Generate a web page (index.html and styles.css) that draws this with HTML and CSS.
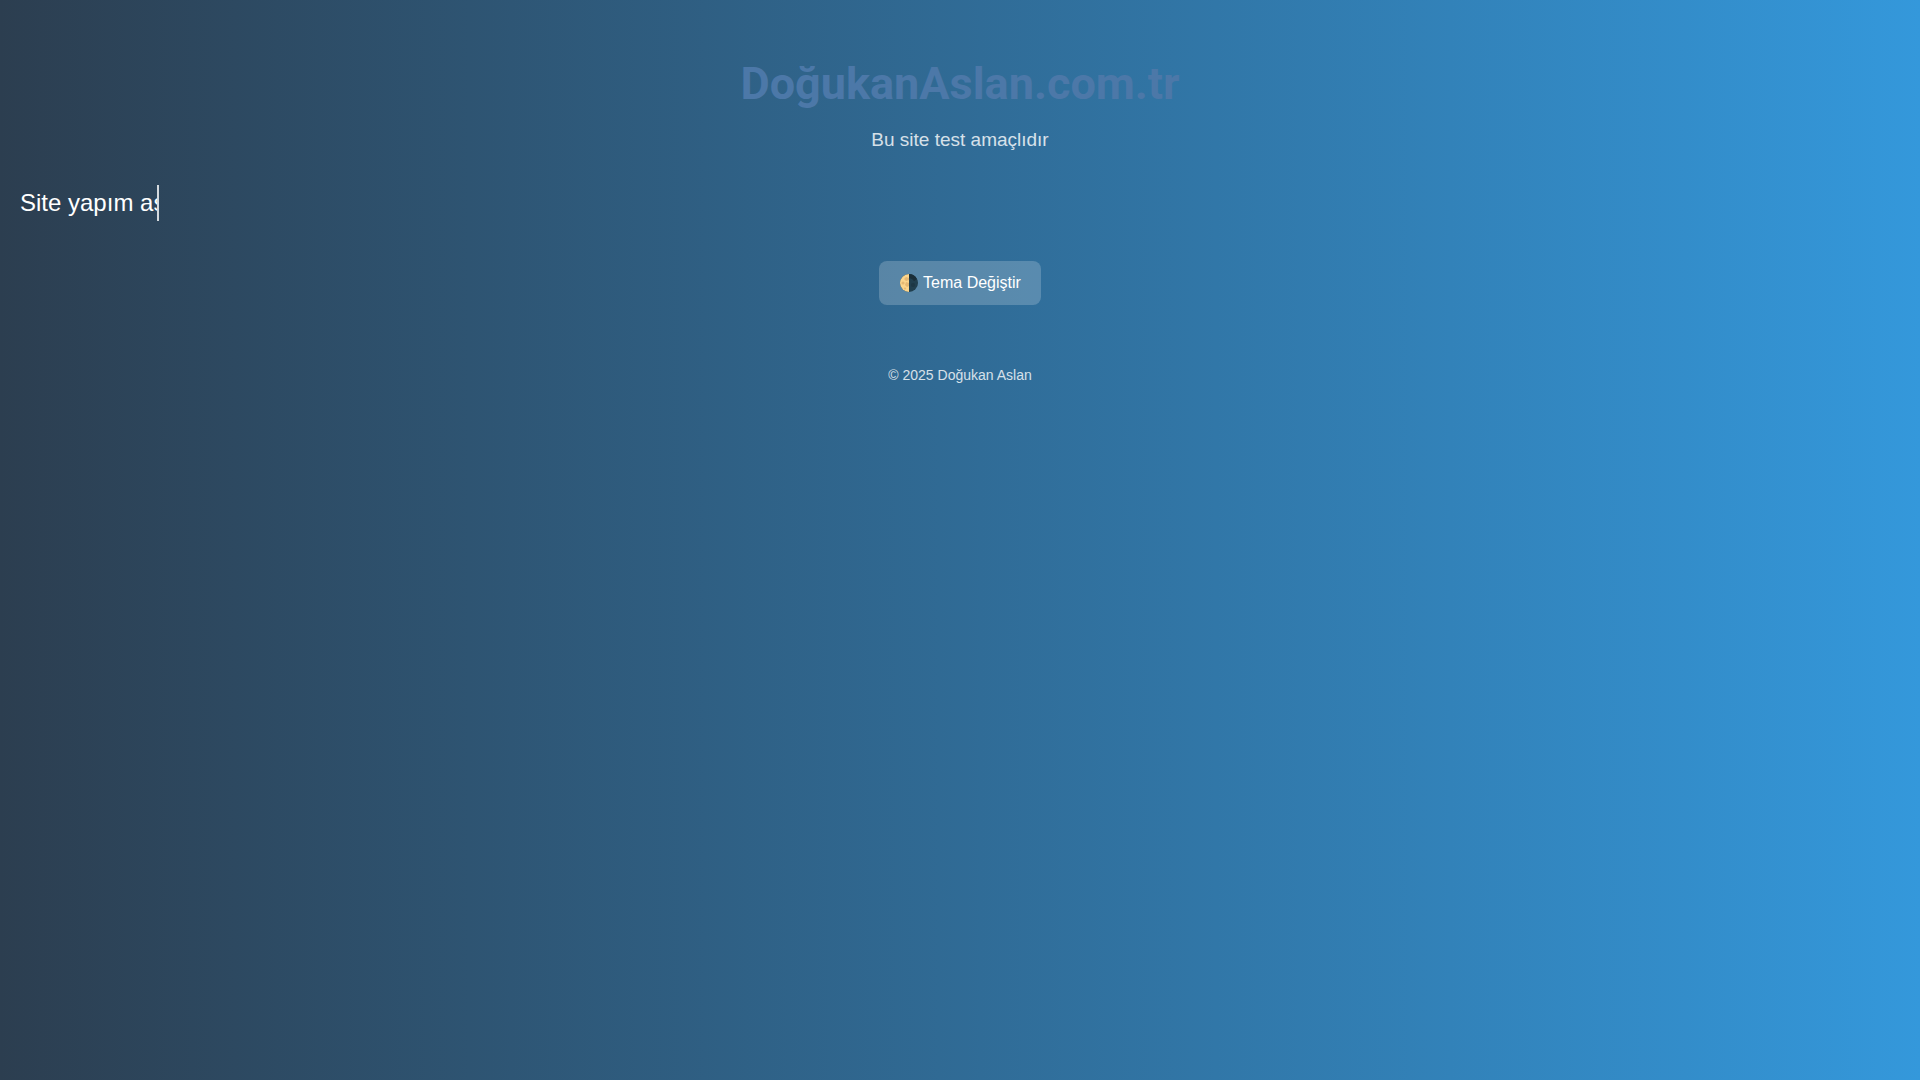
FILE: index.html
```html
<!DOCTYPE html>
<html lang="tr">
<head>
<meta charset="utf-8">
<title>DoğukanAslan.com.tr</title>
<link rel="stylesheet" href="styles.css">
</head>
<body>
<header class="header">
<h1 class="title">DoğukanAslan.com.tr</h1>
<p class="subtitle">Bu site test amaçlıdır</p>
</header>
<main>
<p class="typing">Site yapım aş</p>
<div class="actions">
<button class="theme-button" type="button"><svg class="moon" viewBox="0 0 20 20" aria-hidden="true"><circle cx="10" cy="10" r="9" fill="#213f4e"/><path d="M10 1a9 9 0 0 1 8 5l-3 2-2-2-3-1z" fill="#1a2e38"/><circle cx="14" cy="12" r="2" fill="#1d3744"/><path d="M10 1a9 9 0 0 0 0 18z" fill="#fcd58c"/><g fill="#e5b873"><path d="M10 5L7 4 5 6l2 2 3-1z"/><circle cx="4" cy="10" r="1.6"/><path d="M10 10L7 9l-1 3 2 2 2-1z"/><circle cx="6" cy="15.5" r="1"/></g></svg>Tema Değiştir</button>
</div>
</main>
<footer class="footer">© 2025 Doğukan Aslan</footer>
</body>
</html>
```

FILE: styles.css
```css
* { box-sizing: border-box; }
body {
  margin: 0;
  min-height: 100vh;
  background: linear-gradient(to right, #2c3e50, #3498db);
  color: #fff;
  font-family: "Liberation Sans", Arial, sans-serif;
  text-align: center;
}
.header { padding: 57px 20px 0; }
.title {
  margin: 0;
  color: #4c78a8;
  font: bold 45px/53px Roboto, sans-serif;
}
.subtitle { margin: 19px 0 0; font-size: 19px; line-height: 22px; opacity: 0.8; }
.typing {
  width: 139px;
  height: 36px;
  margin: 34px 0 0 20px;
  overflow: hidden;
  white-space: nowrap;
  border-right: 2px solid rgba(255, 255, 255, 0.8);
  font-size: 24px;
  line-height: 36px;
  text-align: left;
}
.actions { padding-top: 40px; }
.theme-button {
  display: inline-flex;
  align-items: center;
  gap: 4px;
  height: 44px;
  padding: 0 20px;
  border: 0;
  border-radius: 8px;
  background: rgba(255, 255, 255, 0.2);
  color: #fff;
  font: 16px "Liberation Sans", Arial, sans-serif;
  cursor: pointer;
}
.moon { width: 20px; height: 20px; }
.footer { padding: 62px 20px 20px; font-size: 14px; line-height: 17px; opacity: 0.8; }
```
